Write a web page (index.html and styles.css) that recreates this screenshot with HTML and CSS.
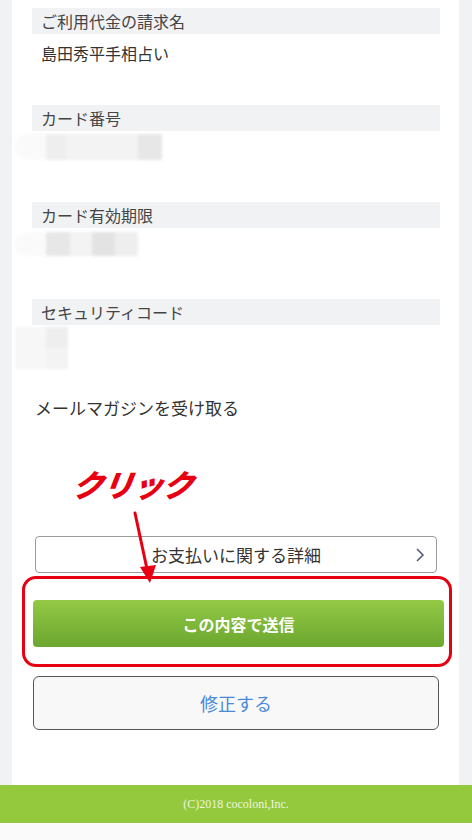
FILE: index.html
```html
<!DOCTYPE html>
<html lang="ja">
<head>
    <meta charset="UTF-8">
    <meta name="viewport" content="width=device-width, initial-scale=1.0">
    <title>お支払い内容の確認</title>
    <link rel="stylesheet" href="styles.css">
</head>
<body>
    <div class="page">
        <div class="field">
            <div class="field-label">ご利用代金の請求名</div>
            <div class="field-value">島田秀平手相占い</div>
        </div>

        <div class="field">
            <div class="field-label">カード番号</div>
            <div class="mosaic mosaic-card">
                <div class="cell c2"></div>
                <div class="cell c1"></div>
                <div class="cell c1"></div>
                <div class="cell c3"></div>
            </div>
        </div>

        <div class="field">
            <div class="field-label">カード有効期限</div>
            <div class="mosaic mosaic-expire">
                <div class="cell c3"></div>
                <div class="cell c1"></div>
                <div class="cell c4"></div>
                <div class="cell c2"></div>
            </div>
        </div>

        <div class="field">
            <div class="field-label">セキュリティコード</div>
            <div class="mosaic mosaic-code">
                <div class="cell c0"></div>
                <div class="cell c2"></div>
                <div class="cell c0"></div>
                <div class="cell c1"></div>
            </div>
        </div>

        <p class="mailmag">メールマガジンを受け取る</p>

        <div class="note">
            <span class="note-text">クリック</span>
            <svg class="note-arrow" width="40" height="76" viewBox="0 0 40 76">
                <line x1="12" y1="2" x2="24" y2="58" stroke="#e60012" stroke-width="3" stroke-linecap="round"/>
                <polygon points="27,72 17,56 33,54" fill="#e60012"/>
            </svg>
        </div>

        <button class="detail-button">
            <span>お支払いに関する詳細</span>
            <svg class="chevron" width="10" height="16" viewBox="0 0 10 16">
                <polyline points="2,2 8,8 2,14" fill="none" stroke="#4d5877" stroke-width="1.5"/>
            </svg>
        </button>

        <div class="highlight">
            <button class="submit-button">この内容で送信</button>
        </div>

        <button class="edit-button">修正する</button>
    </div>

    <footer class="footer">(C)2018 cocoloni,Inc.</footer>
    <div class="bottom-space"></div>
</body>
</html>
```

FILE: styles.css
```css
:root {
    --gutter-color: #f1f2f4;
    --label-color: #f1f2f4;
    --text-color: #333333;
    --green: #95c93d;
    --red: #e60012;
}

body {
    margin: 0;
    padding: 0;
    background-color: var(--gutter-color);
    color: var(--text-color);
    font-family: "Noto Sans CJK JP", "Liberation Sans", sans-serif;
}

.page {
    margin: 0 13px 0 12px;
    padding: 8px 19px 55px 20px;
    background-color: #ffffff;
}

.field {
    height: 97px;
}

.field-label {
    height: 26px;
    line-height: 26px;
    padding-left: 9px;
    background-color: var(--label-color);
    font-size: 16px;
    color: #444444;
}

.field-value {
    margin-top: 8px;
    padding-left: 9px;
    font-size: 16px;
    line-height: 22px;
    color: #333333;
}

/* blurred card details */
.mosaic {
    display: grid;
    margin-left: -17px;
    filter: blur(1.5px);
}

.mosaic-card {
    grid-template-columns: 31px 20px 26px 46px 24px;
    grid-template-rows: 26px;
    margin-top: 3px;
    padding-left: 0;
}

.mosaic-card::before,
.mosaic-expire::before {
    content: '';
    background-color: #fafafa;
    border-radius: 14px 0 0 14px;
}

.mosaic-expire {
    grid-template-columns: 31px 24px 22px 23px 23px;
    grid-template-rows: 24px;
    margin-top: 4px;
}

.mosaic-code {
    grid-template-columns: 31px 22px;
    grid-template-rows: 21px 21px;
    margin-top: 2px;
}

.c0 { background-color: #f7f7f7; }
.c1 { background-color: #f3f3f3; }
.c2 { background-color: #eeeeee; }
.c3 { background-color: #e7e7e7; }
.c4 { background-color: #e3e3e3; }

.mailmag {
    margin: 0;
    padding-left: 3px;
    font-size: 17px;
    line-height: 24px;
    color: #333333;
}

.note {
    position: relative;
    z-index: 2;
    margin-top: 44px;
    padding-left: 41px;
    height: 40px;
}

.note-text {
    display: inline-block;
    font-size: 31px;
    line-height: 40px;
    font-weight: 900;
    font-style: italic;
    letter-spacing: -1px;
    color: var(--red);
    transform: skewX(-8deg);
}

.note-arrow {
    position: absolute;
    left: 91px;
    top: 47px;
}

.detail-button {
    display: flex;
    align-items: center;
    justify-content: center;
    position: relative;
    width: 402px;
    height: 37px;
    margin: 32px 0 0 3px;
    padding: 0;
    background-color: #ffffff;
    border: 1px solid #9a9a9a;
    border-radius: 4px;
    font-family: inherit;
    font-size: 17px;
    color: #333333;
}

.chevron {
    position: absolute;
    right: 11px;
    top: 10px;
}

.highlight {
    margin: 3px -12px 0 -10px;
    padding: 21px 5px 17px 8px;
    border: 3px solid var(--red);
    border-radius: 14px;
}

.submit-button {
    display: block;
    width: 100%;
    height: 47px;
    padding: 0;
    border: none;
    border-radius: 4px;
    background: linear-gradient(to bottom, #93c945, #6ba62f);
    font-family: inherit;
    font-size: 16px;
    font-weight: 700;
    color: #ffffff;
}

.edit-button {
    display: block;
    width: 406px;
    height: 54px;
    margin: 9px 0 0 1px;
    padding: 0;
    background-color: #f8f8f9;
    border: 1.5px solid #555555;
    border-radius: 6px;
    font-family: inherit;
    font-size: 18px;
    color: #4a8ad6;
}

.footer {
    height: 38px;
    line-height: 38px;
    background-color: var(--green);
    text-align: center;
    font-family: "Liberation Serif", serif;
    font-size: 12px;
    color: rgba(255, 255, 255, 0.85);
}

.bottom-space {
    height: 17px;
    background-color: #fafafa;
}
```
